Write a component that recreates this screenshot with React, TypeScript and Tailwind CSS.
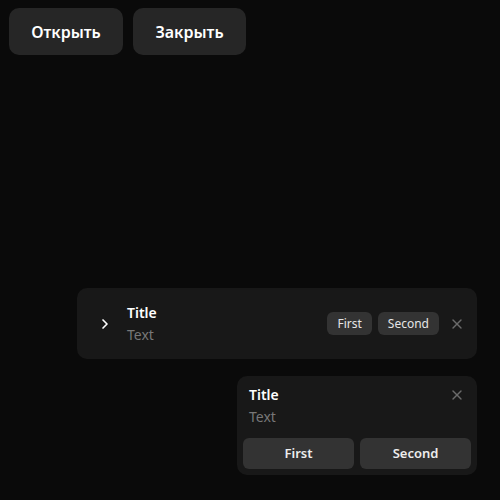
import { ChevronRight, X } from "lucide-react";

function Badge({ children }: { children: string }) {
  return (
    <span className="flex h-[23px] items-center rounded-md bg-[#333333] px-[10px] text-[12px] text-[#e5e5e5]">
      {children}
    </span>
  );
}

export default function App() {
  return (
    <div
      className="flex h-[500px] w-[500px] flex-col justify-between bg-[#0a0a0a] text-white"
      style={{ fontFamily: '"Noto Sans", sans-serif' }}
    >
      <div className="flex gap-[10px] pl-[9px] pt-[8px]">
        <button className="h-[47px] w-[114px] rounded-[10px] bg-[#262626] text-[16px] font-semibold">
          Открыть
        </button>
        <button className="h-[47px] w-[113px] rounded-[10px] bg-[#262626] text-[16px] font-semibold">
          Закрыть
        </button>
      </div>

      <div className="flex flex-col items-end gap-[17px] pb-[25px] pr-[23px]">
        <div className="flex h-[71px] w-[400px] items-center rounded-[10px] bg-[#181818]">
          <ChevronRight className="ml-[20px] h-4 w-4 text-white" strokeWidth={2.5} />
          <div className="ml-[14px] flex flex-col">
            <span className="text-[14px] font-semibold leading-[22px]">Title</span>
            <span className="text-[14px] leading-[22px] text-[#777777]">Text</span>
          </div>
          <div className="ml-auto flex items-center gap-[6px]">
            <Badge>First</Badge>
            <Badge>Second</Badge>
          </div>
          <X className="ml-[10px] mr-[12px] h-4 w-4 text-[#6b6b6b]" strokeWidth={2} />
        </div>

        <div className="flex w-[240px] flex-col rounded-[10px] bg-[#181818] p-[6px]">
          <div className="flex items-start justify-between pl-[6px] pr-[6px] pt-[2px]">
            <div className="flex flex-col">
              <span className="text-[14px] font-semibold leading-[22px]">Title</span>
              <span className="text-[14px] leading-[22px] text-[#777777]">Text</span>
            </div>
            <X className="mt-[3px] h-4 w-4 text-[#6b6b6b]" strokeWidth={2} />
          </div>
          <div className="mt-[10px] flex gap-[6px]">
            <button className="h-[31px] flex-1 rounded-md bg-[#333333] text-[13px] font-semibold text-[#ededed]">
              First
            </button>
            <button className="h-[31px] flex-1 rounded-md bg-[#333333] text-[13px] font-semibold text-[#ededed]">
              Second
            </button>
          </div>
        </div>
      </div>
    </div>
  );
}
